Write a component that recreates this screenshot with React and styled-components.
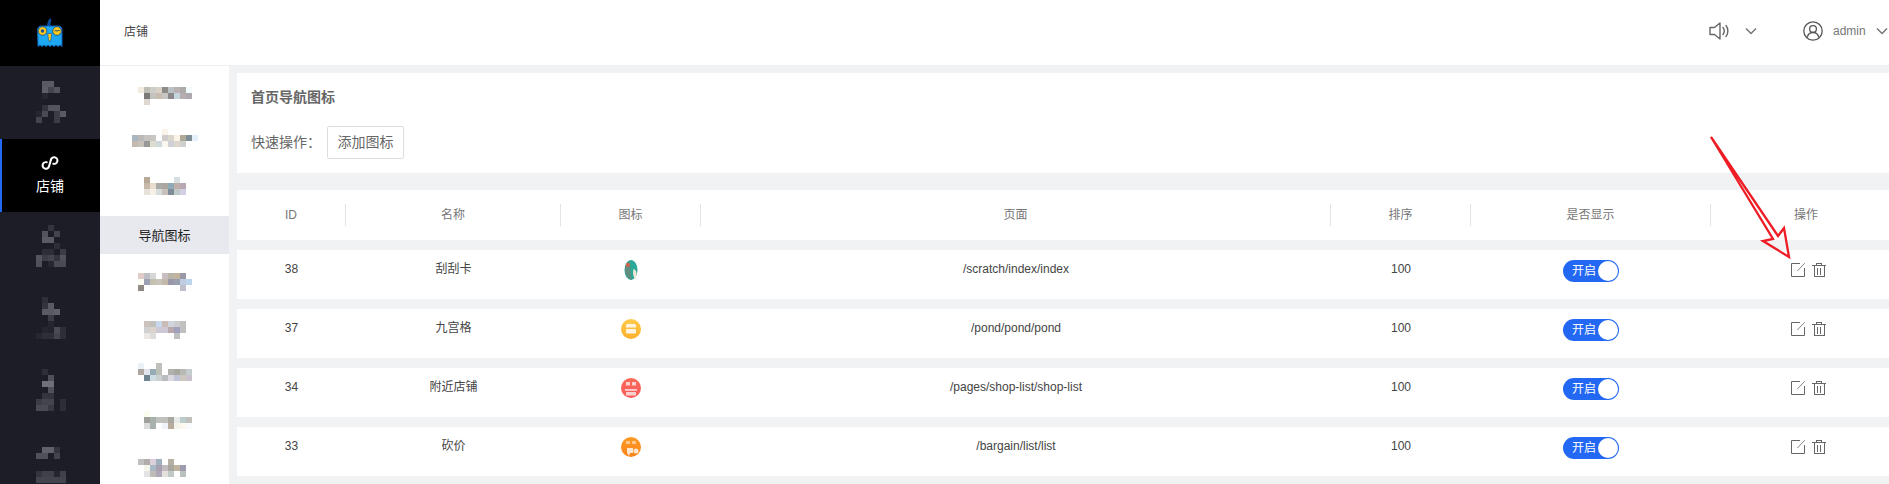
import React from "react";
import styled, { createGlobalStyle } from "styled-components";

const Global = createGlobalStyle`
  html, body { margin: 0; padding: 0; background: #fff; overflow: hidden; }
  * { box-sizing: border-box; }
  body { font-family: "Liberation Sans", "Noto Sans CJK SC", sans-serif; }
`;

const Page = styled.div`
  position: relative;
  display: flex;
  width: 1889px;
  height: 484px;
  overflow: hidden;
`;
const Sidebar = styled.nav`
  flex: 0 0 100px;
  background: #1c1d26;
  overflow: hidden;
`;
const LogoBox = styled.div`
  height: 66px;
  background: #000;
  padding: 18px 0 0 36px;
  svg { display: block; }
`;
const NavItem = styled.div`
  height: 73px;
  padding: ${(p) => p.$top}px 0 0 36px;
`;
const ActiveNav = styled.div`
  height: 73px;
  background: #000;
  border-left: 2px solid #2368f2;
  display: flex;
  flex-direction: column;
  align-items: center;
  padding-top: 15px;
  padding-right: 2px;
  color: #fff;
  font-size: 14px;
  line-height: 18px;
  gap: 5px;
  svg { display: block; }
`;
const Content = styled.div`
  flex: 1;
  min-width: 0;
  display: flex;
  flex-direction: column;
`;
const Header = styled.header`
  flex: 0 0 66px;
  display: flex;
  align-items: center;
  padding: 0 0 4px 24px;
  border-bottom: 1px solid #eef0f3;
  font-size: 12px;
  color: #444;
  background: #fff;
`;
const Crumb = styled.span`
  flex: 1;
`;
const HeaderGroup = styled.div`
  display: flex;
  align-items: center;
  margin-right: ${(p) => p.$right}px;
  gap: ${(p) => p.$gap}px;
  svg { display: block; }
`;
const UserName = styled.span`
  font-size: 12px;
  color: #777;
  width: 33px;
`;
const Body = styled.div`
  flex: 1;
  display: flex;
  min-height: 0;
`;
const SubNav = styled.aside`
  flex: 0 0 129px;
  background: #fff;
  padding-top: 9px;
  display: flex;
  flex-direction: column;
  gap: 9px;
  overflow: hidden;
`;
const SubItem = styled.div`
  flex: 0 0 38px;
  padding: ${(p) => p.$top}px 0 0 32px;
  svg { display: block; }
`;
const SubActive = styled.div`
  flex: 0 0 38px;
  display: flex;
  align-items: center;
  justify-content: center;
  padding-bottom: 2px;
  background: #e8e9ef;
  font-size: 13px;
  color: #222;
`;
const Main = styled.main`
  flex: 1;
  min-width: 0;
  background: #f1f2f4;
  padding: 7px 0 0 8px;
  overflow: hidden;
`;
const TopCard = styled.section`
  width: 1665px;
  height: 100px;
  background: #fff;
  padding: 14px 14px 0;
  margin-bottom: 17px;
`;
const Title = styled.h2`
  margin: 0 0 19px;
  font-size: 14px;
  line-height: 20px;
  font-weight: 700;
  color: #666;
`;
const QuickRow = styled.div`
  display: flex;
  align-items: center;
  font-size: 14px;
  color: #666;
`;
const QuickLabel = styled.span`
  width: 76px;
  padding-bottom: 3px;
`;
const AddButton = styled.button`
  width: 77px;
  height: 33px;
  padding: 0 0 3px;
  border: 1px solid #dcdee2;
  border-radius: 2px;
  background: #fff;
  color: #666;
  font: inherit;
`;
const Grid = styled.div`
  width: 1665px;
  display: grid;
  grid-template-columns: 109px 215px 140px 630px 140px 240px 191px;
  background: #fff;
  font-size: 12px;
`;
const HeadRow = styled(Grid)`
  height: 50px;
  align-items: center;
  margin-bottom: 10px;
  color: #777;
`;
const HeadCell = styled.div`
  height: 22px;
  line-height: 22px;
  text-align: center;
  border-right: 1px solid ${(p) => (p.$last ? "transparent" : "#e2e3e8")};
`;
const DataRow = styled(Grid)`
  height: 49px;
  margin-bottom: 10px;
  color: #444;
`;
const Cell = styled.div`
  display: flex;
  justify-content: center;
  align-items: flex-start;
  padding-top: 10px;
  line-height: 18px;
  svg { display: block; }
`;
const Toggle = styled.span`
  position: relative;
  display: block;
  width: 56px;
  height: 22px;
  border-radius: 11px;
  background: #2368f2;
  color: #fff;
  font-size: 12px;
  line-height: 22px;
  padding-left: 9px;
`;
const Knob = styled.span`
  position: absolute;
  top: 1px;
  right: 1px;
  width: 20px;
  height: 20px;
  border-radius: 50%;
  background: #fff;
`;
const Actions = styled.div`
  display: flex;
  gap: 7px;
  padding: 3px 0 0 4px;
`;
const ThumbSvg = styled.svg`
  filter: blur(0.45px);
`;
const Annotation = styled.svg`
  position: absolute;
  left: 0;
  top: 0;
  pointer-events: none;
`;

const Mosaic = ({ rows, width }) => (
  <svg width={width} height={rows.length * 6} shapeRendering="crispEdges">
    {rows.flatMap((r, y) =>
      r.map(([c, color]) => (
        <rect key={`${y}-${c}`} x={c * 6} y={y * 6} width="6" height="6" fill={color} />
      ))
    )}
  </svg>
);

const Logo = () => (
  <svg width="28" height="30" viewBox="0 0 28 30">
    <path d="M11 9c0-4 1-7 3-8.500 1.800-.3 1.300 2 .8 3.500-.5 1.500-.5 3 0 5z" fill="#0b4d9c" />
    <path d="M1.500 12c0-2.500 2-4 4-4h17c2 0 3.500 1.500 3.500 4v16.500l-2-1.500-2 1.500-2-1.500-2 1.500-2-1.500-2 1.500-2-1.500-2 1.500-2-1.500-2 1.500-2-1.500-2 1.500z" fill="#1ea7f2" stroke="#0b5fae" strokeWidth="1" />
    <circle cx="6.500" cy="13" r="4.300" fill="#ffc81e" stroke="#0b3c75" strokeWidth=".7" />
    <circle cx="6.500" cy="13" r="1.700" fill="#1b4f9c" />
    <circle cx="21" cy="13" r="4.300" fill="#ffc81e" stroke="#0b3c75" strokeWidth=".7" />
    <path d="M18.500 13c1-1.200 1.800 0 2.500 0s1.500-1 2.500-.5" fill="none" stroke="#0b3c75" strokeWidth="1" />
    <path d="M11.700 15.500h4l-.8 6-1.200 2.500-1.200-2.500z" fill="#ffc81e" stroke="#0b4d9c" strokeWidth=".6" />
  </svg>
);

const Speaker = () => (
  <svg width="21" height="20" viewBox="0 0 21 20" fill="none" stroke="#666" strokeWidth="1.400">
    <path d="M1 6.500h4.500L11 2v16l-5.500-4.500H1z" strokeLinejoin="round" />
    <path d="M14 6.500c1.500 2 1.500 5 0 7M17 4.500c2.500 3 2.500 8 0 11" strokeLinecap="round" />
  </svg>
);
const Chevron = () => (
  <svg width="12" height="8" viewBox="0 0 12 8" fill="none" stroke="#777" strokeWidth="1.500">
    <path d="M1 1.500l5 5 5-5" />
  </svg>
);
const Avatar = () => (
  <svg width="20" height="20" viewBox="0 0 20 20" fill="none" stroke="#555" strokeWidth="1.300">
    <circle cx="10" cy="10" r="9.200" />
    <circle cx="10" cy="8" r="3.400" />
    <path d="M4.300 16.500c.5-3 2.500-5 5.700-5s5.200 2 5.700 5" />
  </svg>
);
const EditIcon = () => (
  <svg width="14" height="14" viewBox="0 0 14 14" fill="none" stroke="#666" strokeWidth="1">
    <path d="M9 .5H.5v13h13V5" />
    <path d="M6.300 8L13.800.2" strokeWidth=".8" />
  </svg>
);
const TrashIcon = () => (
  <svg width="14" height="14" viewBox="0 0 14 14" fill="none" stroke="#666" strokeWidth="1" shapeRendering="crispEdges">
    <path d="M0 2.500h14M4.500 2.500V.5h5v2M2 2.500v11h10v-11M5.500 5v6.500M8.500 5v6.500" />
  </svg>
);
const MiniIcon = () => (
  <svg width="18" height="18" viewBox="0 0 18 18" fill="none" stroke="#fff" strokeWidth="2" strokeLinecap="round">
    <g transform="rotate(16 9 9)">
      <path d="M9 5.500v7a3.300 3.300 0 1 1-3.300-3.300" />
      <path d="M9 5.500a3.300 3.300 0 1 1 3.300 3.300" />
    </g>
  </svg>
);

const Thumb = ({ kind }) => {
  const id = `g-${kind}`;
  const colors = {
    grid: ["#ffcb4c", "#fdb02c"],
    shop: ["#fb6a58", "#fb5a5a"],
    cut: ["#fd9a26", "#fb8418"],
  }[kind] || [];
  return (
    <ThumbSvg width="20" height="20" viewBox="0 0 20 20">
      <defs>
        <linearGradient id={id} x1="0" y1="0" x2="0" y2="1">
          <stop offset="0" stopColor={colors[0]} />
          <stop offset="1" stopColor={colors[1]} />
        </linearGradient>
      </defs>
      {kind === "scratch" ? (
        <g>
          <ellipse cx="10" cy="10" rx="6.500" ry="10" fill="#2aa898" />
          <path d="M8 1c2 4 1 10 3 19-4-1-7-5-7-10s2-8 4-9z" fill="#5f8f80" />
          <circle cx="7" cy="5" r="2" fill="#d8604a" />
          <path d="M12.500 9c3.500 1 4 6 1.500 10-2-3-2.500-6-1.500-10z" fill="#efe6d4" />
        </g>
      ) : (
        <g>
          <circle cx="10" cy="10" r="10" fill={`url(#${id})`} />
          {kind === "grid" && (
            <g fill="#fff" opacity=".85">
              <path d="M5 8.500V6.500C5 5.500 6 5 7 5h6c1 0 2 .5 2 1.500v2z" />
              <rect x="5" y="10" width="10" height="4.500" rx="1" />
            </g>
          )}
          {kind === "shop" && (
            <g fill="#fff" opacity=".7">
              <rect x="5" y="4" width="4" height="3.500" />
              <rect x="11" y="4" width="4" height="3.500" />
              <rect x="4" y="11" width="12" height="1.800" />
              <rect x="5" y="14" width="10" height="3.500" />
            </g>
          )}
          {kind === "cut" && (
            <g fill="#fff" opacity=".8">
              <rect x="5" y="4" width="4" height="3" opacity=".6" />
              <rect x="11" y="4" width="4" height="3" opacity=".6" />
              <path d="M6 11h6v5H9l-1 3-2-3z" />
              <circle cx="15" cy="14" r="2.500" />
            </g>
          )}
        </g>
      )}
    </ThumbSvg>
  );
};

const D = (v) => `rgb(${v},${v},${v + 8})`;
const dark = [
  { top: 15, rows: [
    [[1, D(90)], [2, D(90)]],
    [[1, D(94)], [2, D(68)], [3, D(84)]],
    [[1, D(38)]],
    [],
    [[1, D(52)], [2, D(84)], [3, D(84)]],
    [[0, D(38)], [1, D(74)], [3, D(60)], [4, D(90)]],
    [[0, D(68)], [3, D(60)]],
  ] },
  null,
  { top: 13, rows: [
    [[2, D(52)]],
    [[1, D(84)], [3, D(68)]],
    [[1, D(90)], [2, D(90)]],
    [[3, D(46)]],
    [[1, D(46)], [2, D(46)], [4, D(60)]],
    [[0, D(84)], [1, D(60)], [2, D(68)], [3, D(52)], [4, D(80)]],
    [[0, D(80)], [2, D(38)], [3, D(74)], [4, D(74)]],
  ] },
  { top: 12, rows: [
    [[1, D(46)]],
    [[1, D(52)], [2, D(90)]],
    [[1, D(90)], [2, D(90)], [3, D(96)]],
    [[2, D(60)]],
    [[2, D(38)]],
    [[1, D(38)], [2, D(34)], [3, D(74)], [4, D(46)]],
    [[0, D(38)], [1, D(46)], [2, D(46)], [3, D(68)], [4, D(46)]],
  ] },
  { top: 11, rows: [
    [[1, D(46)]],
    [[2, D(80)]],
    [[1, D(112)], [2, D(112)]],
    [[2, D(80)]],
    [[1, D(52)], [2, D(52)]],
    [[0, D(60)], [1, D(68)], [2, D(68)], [4, D(46)]],
    [[0, D(74)], [1, D(74)], [2, D(56)], [4, D(46)]],
  ] },
  { top: 16, rows: [
    [[1, D(96)], [2, D(96)], [3, D(52)]],
    [[0, D(80)], [1, D(80)], [3, D(68)]],
    [],
    [],
    [[0, D(52)], [1, D(64)], [2, D(64)], [3, D(38)], [4, D(64)]],
    [[0, D(68)], [1, D(68)], [2, D(68)], [3, D(68)], [4, D(68)]],
  ] },
];

const light = {
  a: { top: 12, rows: [
    [[1, "#f3ebde"], [2, "#c0bdb5"], [3, "#cfcdc8"], [4, "#d8d2c8"], [5, "#8d8a88"], [6, "#b9c0c6"], [7, "#b9b1b1"], [8, "#aeaaaa"], [9, "#f2fbfc"]],
    [[2, "#7a7878"], [3, "#c5c3c0"], [4, "#c9bcb0"], [5, "#c8c6c3"], [6, "#8a8888"], [7, "#c5d4de"], [8, "#b5aeae"], [9, "#acaab0"]],
    [[2, "#e0d8d0"]],
  ] },
  b: { top: 7, rows: [
    [[5, "#faf3ec"]],
    [[0, "#a9b6c0"], [1, "#bbb8b8"], [2, "#c8c2c0"], [3, "#c8c6c0"], [5, "#d0cccc"], [6, "#dad6cc"], [7, "#faf3e6"], [8, "#b0a898"], [9, "#7f8e96"], [10, "#e6f0fa"]],
    [[0, "#c5b8ae"], [1, "#c8c2bc"], [2, "#989898"], [3, "#dcdcd0"], [4, "#d0d8dc"], [5, "#faf6f0"], [6, "#d0d0d6"], [7, "#dcd6cc"], [8, "#d0d0cc"]],
  ] },
  c: { top: 8, rows: [
    [[2, "#b8a898"], [7, "#d6dee2"]],
    [[2, "#c8b8aa"], [3, "#e8dcca"], [4, "#aaaaa6"], [5, "#aaa6a0"], [6, "#8fabb8"], [7, "#c0b0aa"], [8, "#b8a8b4"]],
    [[2, "#e8e2da"], [3, "#f6f0e6"], [4, "#d8dcdc"], [5, "#c8c0ba"], [6, "#7f8e96"], [7, "#c0c8c8"], [8, "#d4d0e4"]],
  ] },
  e: { top: 10, rows: [
    [[1, "#e0ccc8"], [2, "#bcc0c4"], [3, "#d6d8d8"], [5, "#c8c0c0"], [6, "#b8b4a8"], [7, "#c0b4a0"], [8, "#9a98a4"]],
    [[1, "#fcfcf4"], [2, "#9ea0b4"], [3, "#c4c0b0"], [4, "#c8c4bc"], [5, "#c4b8a8"], [6, "#9a98a8"], [7, "#9aa0b0"], [8, "#c0cce0"], [9, "#bcd4ec"]],
    [[1, "#908a84"], [8, "#c0c0cc"]],
  ] },
  f: { top: 11, rows: [
    [[2, "#ccc4bc"], [3, "#c0c0bc"], [4, "#c8d8ec"], [5, "#ccbcb8"], [6, "#d0d4dc"], [7, "#ccccd0"], [8, "#c0c0c0"]],
    [[2, "#d0d0d0"], [3, "#dcd4cc"], [4, "#ccc8d4"], [5, "#d0c8d4"], [6, "#b8a8ac"], [7, "#a0a0bc"], [8, "#c0c0c0"]],
    [[2, "#ece8e4"], [3, "#dcdcdc"], [7, "#c0c0c0"]],
  ] },
  g: { top: 6, rows: [
    [[1, "#e8f0f8"], [4, "#c0c0bc"]],
    [[1, "#b0a8a0"], [2, "#e0e4ec"], [3, "#98acb8"], [4, "#bcc0b8"], [6, "#b0b0ac"], [7, "#a8a8a0"], [8, "#b8b8b4"], [9, "#c4ccd0"]],
    [[2, "#708490"], [3, "#d0dce4"], [4, "#ccd0d0"], [5, "#b8bcc0"], [6, "#dcd8e0"], [7, "#c0c4d8"], [8, "#ccc8c0"], [9, "#c8c0cc"]],
  ] },
  h: { top: 7, rows: [
    [[2, "#fcfcf0"]],
    [[2, "#a0a09c"], [3, "#a8b0ac"], [4, "#c0c0bc"], [5, "#c0c0bc"], [6, "#a8a8a0"], [7, "#e8ece8"], [8, "#bccccc"], [9, "#c0c0bc"]],
    [[2, "#dcdcdc"], [3, "#a8b0b0"], [5, "#f0f4fa"], [6, "#b8ac9c"], [7, "#f4f4ec"], [8, "#fcf8f0"], [9, "#f8fafc"]],
  ] },
  i: { top: 8, rows: [
    [[1, "#c0c0c0"], [2, "#b0acac"], [3, "#dcd0dc"], [4, "#a0b0bc"], [6, "#b8b0a4"]],
    [[2, "#f4f4ec"], [3, "#a8b8c4"], [4, "#a8a0b0"], [5, "#c0bcc0"], [6, "#a8a8a0"], [7, "#c0b4a0"], [8, "#a09cb0"]],
    [[2, "#e4e4e4"], [3, "#c0bcb8"], [4, "#b0a8b8"], [5, "#e4e0dc"], [6, "#c0c8c8"], [8, "#b8c0c0"]],
  ] },
};

const rows = [
  { id: 38, name: "刮刮卡", kind: "scratch", page: "/scratch/index/index" },
  { id: 37, name: "九宫格", kind: "grid", page: "/pond/pond/pond" },
  { id: 34, name: "附近店铺", kind: "shop", page: "/pages/shop-list/shop-list" },
  { id: 33, name: "砍价", kind: "cut", page: "/bargain/list/list" },
];
const heads = ["ID", "名称", "图标", "页面", "排序", "是否显示", "操作"];

export default function App() {
  return (
    <Page>
      <Global />
      <Sidebar>
        <LogoBox><Logo /></LogoBox>
        {dark.map((m, i) =>
          m ? (
            <NavItem key={i} $top={m.top}><Mosaic rows={m.rows} width={30} /></NavItem>
          ) : (
            <ActiveNav key={i}><MiniIcon />店铺</ActiveNav>
          )
        )}
      </Sidebar>
      <Content>
        <Header>
          <Crumb>店铺</Crumb>
          <HeaderGroup $gap={15} $right={46}><Speaker /><Chevron /></HeaderGroup>
          <HeaderGroup $gap={10} $right={1}><Avatar /><UserName>admin</UserName><Chevron /></HeaderGroup>
        </Header>
        <Body>
          <SubNav>
            <SubItem $top={light.a.top}><Mosaic rows={light.a.rows} width={66} /></SubItem>
            <SubItem $top={light.b.top}><Mosaic rows={light.b.rows} width={66} /></SubItem>
            <SubItem $top={light.c.top}><Mosaic rows={light.c.rows} width={66} /></SubItem>
            <SubActive>导航图标</SubActive>
            {["e", "f", "g", "h", "i"].map((k) => (
              <SubItem key={k} $top={light[k].top}><Mosaic rows={light[k].rows} width={66} /></SubItem>
            ))}
          </SubNav>
          <Main>
            <TopCard>
              <Title>首页导航图标</Title>
              <QuickRow>
                <QuickLabel>快速操作：</QuickLabel>
                <AddButton>添加图标</AddButton>
              </QuickRow>
            </TopCard>
            <HeadRow>
              {heads.map((h, i) => (
                <HeadCell key={h} $last={i === heads.length - 1}>{h}</HeadCell>
              ))}
            </HeadRow>
            {rows.map((r) => (
              <DataRow key={r.id}>
                <Cell>{r.id}</Cell>
                <Cell>{r.name}</Cell>
                <Cell><Thumb kind={r.kind} /></Cell>
                <Cell>{r.page}</Cell>
                <Cell>100</Cell>
                <Cell><Toggle>开启<Knob /></Toggle></Cell>
                <Cell><Actions><EditIcon /><TrashIcon /></Actions></Cell>
              </DataRow>
            ))}
          </Main>
        </Body>
      </Content>
      <Annotation width="1889" height="484" viewBox="0 0 1889 484" fill="none">
        <path d="M1711 137L1778 236L1784 228L1789 257L1763 241L1773 239Z" stroke="#ee1c25" strokeWidth="2.300" strokeLinejoin="miter" />
      </Annotation>
    </Page>
  );
}
